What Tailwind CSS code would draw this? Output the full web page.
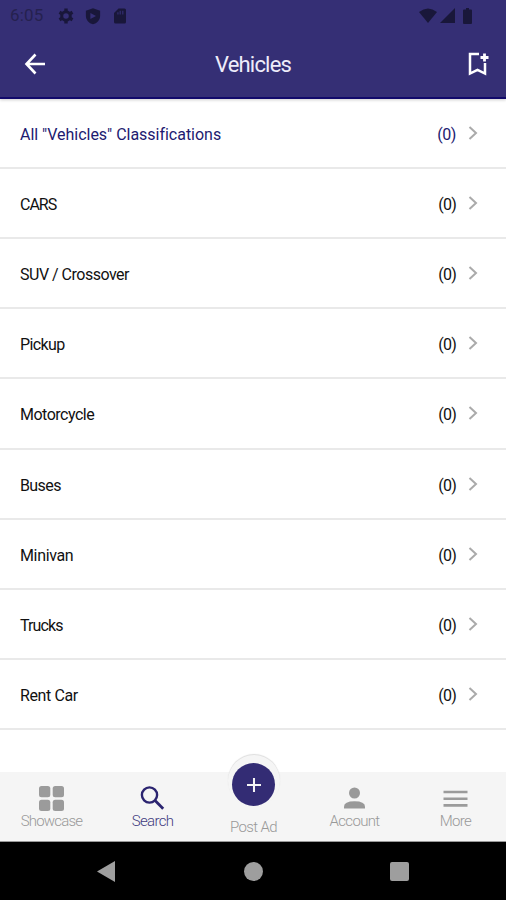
<!DOCTYPE html>
<html lang="en">
<head>
<meta charset="utf-8">
<title>Vehicles</title>
<script src="https://cdn.jsdelivr.net/npm/@tailwindcss/browser@4"></script>
</head>
<body class="h-[900px] w-[506px] overflow-hidden bg-white font-[Roboto,sans-serif]">
<div class="flex h-full flex-col">
  <header class="h-[99px] shrink-0 border-b-2 border-[#120a6b] bg-[#352f75] shadow-[0_1px_3px_rgba(0,0,0,0.2)]">
    <div class="flex h-[31px] items-center pl-[10px] pr-[33px] text-[#19173a]">
      <span class="w-[34px] text-[17px] leading-none tracking-[0.2px] text-[#25214f]">6:05</span>
      <svg class="ml-[13px] size-[18px]" viewBox="0 0 24 24" fill="none" stroke="currentColor"><circle cx="12" cy="12" r="5.700" stroke-width="4"/><path stroke-width="4.500" d="M12 2v4M12 18v4M3.300 7l3.500 2M17.200 15l3.500 2M3.300 17l3.500-2M17.200 9l3.500-2"/></svg>
      <svg class="ml-[9px] size-[18px]" viewBox="0 0 24 24" fill="currentColor"><path fill-rule="evenodd" d="M12 1.500 2.500 5v6.500c0 5.500 4 10 9.500 11.500 5.500-1.500 9.500-6 9.500-11.500V5zM8.500 8v8l7.500-4z"/></svg>
      <svg class="ml-[9px] size-[18px]" viewBox="0 0 24 24" fill="currentColor"><path fill-rule="evenodd" d="M18 2h-8L4 8v12a2 2 0 0 0 2 2h12a2 2 0 0 0 2-2V4a2 2 0 0 0-2-2zM8.500 7H10v3H8.500zM11.500 5H13v5h-1.500zM15 5h1.500v5H15z"/></svg>
      <svg class="ml-auto h-[15px] w-[18px]" viewBox="0 0 18 15" fill="currentColor"><path d="M0 4Q9-3 18 4L9 15z"/></svg>
      <svg class="ml-[3px] h-[15px] w-[15px]" viewBox="0 0 15 15" fill="currentColor"><path d="M0 15 15 0v15z"/></svg>
      <svg class="ml-[8px] mr-px h-[16px] w-[9px]" viewBox="0 0 9 16" fill="currentColor"><path d="M3 0h3v1.500h2q1 0 1 1V15q0 1-1 1H1q-1 0-1-1V2.500q0-1 1-1h2z"/></svg>
    </div>
    <div class="grid h-[66px] grid-cols-[60px_1fr_60px] items-center text-white">
      <svg class="ml-[24px] size-[22px]" viewBox="0 0 22 22" fill="none" stroke="currentColor" stroke-width="2.600"><path d="M21 11H3M11.500 1.500 2.500 11l9 9.500"/></svg>
      <h1 class="pt-[2px] text-center text-[22px] leading-none tracking-[-0.8px] text-[#eeecfa]">Vehicles</h1>
      <svg class="ml-[21px] h-[26px] w-[22px]" viewBox="0 0 22 26" fill="none" stroke="currentColor"><path stroke-width="2.500" d="M12 3H3v19.500l7.500-3.700 7.500 3.700V12"/><path stroke-width="2.800" d="M13.500 6.500h8M17.500 2.500v8"/></svg>
    </div>
  </header>
  <main class="flex h-[673px] shrink-0 flex-col text-[16px] leading-none text-[#111]">
    <div class="flex h-[70px] items-center border-b-2 border-[#e9e9e9] pl-5 pr-[28px] text-[#211a70]"><span class="pt-[3px] tracking-[-0.020px]">All "Vehicles" Classifications</span><span class="ml-auto mr-[12px] pt-[3px] tracking-[-0.4px]">(0)</span><svg class="h-[14px] w-[10px]" viewBox="0 0 10 14" fill="none" stroke="#aaa" stroke-width="2"><path d="M1.500 1 8 7l-6.500 6"/></svg></div>
    <div class="flex h-[70.150px] items-center border-b-2 border-[#e9e9e9] pl-5 pr-[28px]"><span class="pt-[4px] tracking-[-1px]">CARS</span><span class="ml-auto mr-[12px] pt-[4px] tracking-[-0.8px]">(0)</span><svg class="h-[14px] w-[10px]" viewBox="0 0 10 14" fill="none" stroke="#aaa" stroke-width="2"><path d="M1.500 1 8 7l-6.500 6"/></svg></div>
    <div class="flex h-[70.150px] items-center border-b-2 border-[#e9e9e9] pl-5 pr-[28px]"><span class="pt-[4px] tracking-[-0.5px]">SUV / Crossover</span><span class="ml-auto mr-[12px] pt-[4px] tracking-[-0.8px]">(0)</span><svg class="h-[14px] w-[10px]" viewBox="0 0 10 14" fill="none" stroke="#aaa" stroke-width="2"><path d="M1.500 1 8 7l-6.500 6"/></svg></div>
    <div class="flex h-[70.150px] items-center border-b-2 border-[#e9e9e9] pl-5 pr-[28px]"><span class="pt-[4px] tracking-[-0.6px]">Pickup</span><span class="ml-auto mr-[12px] pt-[4px] tracking-[-0.8px]">(0)</span><svg class="h-[14px] w-[10px]" viewBox="0 0 10 14" fill="none" stroke="#aaa" stroke-width="2"><path d="M1.500 1 8 7l-6.500 6"/></svg></div>
    <div class="flex h-[70.150px] items-center border-b-2 border-[#e9e9e9] pl-5 pr-[28px]"><span class="pt-[4px] tracking-[-0.5px]">Motorcycle</span><span class="ml-auto mr-[12px] pt-[4px] tracking-[-0.8px]">(0)</span><svg class="h-[14px] w-[10px]" viewBox="0 0 10 14" fill="none" stroke="#aaa" stroke-width="2"><path d="M1.500 1 8 7l-6.500 6"/></svg></div>
    <div class="flex h-[70.150px] items-center border-b-2 border-[#e9e9e9] pl-5 pr-[28px]"><span class="pt-[4px] tracking-[-0.6px]">Buses</span><span class="ml-auto mr-[12px] pt-[4px] tracking-[-0.8px]">(0)</span><svg class="h-[14px] w-[10px]" viewBox="0 0 10 14" fill="none" stroke="#aaa" stroke-width="2"><path d="M1.500 1 8 7l-6.500 6"/></svg></div>
    <div class="flex h-[70.150px] items-center border-b-2 border-[#e9e9e9] pl-5 pr-[28px]"><span class="pt-[4px] tracking-[-0.35px]">Minivan</span><span class="ml-auto mr-[12px] pt-[4px] tracking-[-0.8px]">(0)</span><svg class="h-[14px] w-[10px]" viewBox="0 0 10 14" fill="none" stroke="#aaa" stroke-width="2"><path d="M1.500 1 8 7l-6.500 6"/></svg></div>
    <div class="flex h-[70.150px] items-center border-b-2 border-[#e9e9e9] pl-5 pr-[28px]"><span class="pt-[4px] tracking-[-0.9px]">Trucks</span><span class="ml-auto mr-[12px] pt-[4px] tracking-[-0.8px]">(0)</span><svg class="h-[14px] w-[10px]" viewBox="0 0 10 14" fill="none" stroke="#aaa" stroke-width="2"><path d="M1.500 1 8 7l-6.500 6"/></svg></div>
    <div class="flex h-[70.150px] items-center border-b-2 border-[#e9e9e9] pl-5 pr-[28px]"><span class="pt-[4px] tracking-[-0.4px]">Rent Car</span><span class="ml-auto mr-[12px] pt-[4px] tracking-[-0.8px]">(0)</span><svg class="h-[14px] w-[10px]" viewBox="0 0 10 14" fill="none" stroke="#aaa" stroke-width="2"><path d="M1.500 1 8 7l-6.500 6"/></svg></div>
  </main>
  <nav class="relative grid h-[70px] shrink-0 grid-cols-5 border-b border-[#999] bg-[#f5f5f5] pl-px text-center text-[15px] font-light leading-none tracking-[-0.65px] text-[#999]">
    <div class="flex flex-col items-center pt-[14px]"><svg class="size-[25px]" viewBox="0 0 25 25" fill="#9b9b9b"><rect width="11.300" height="11.300" rx="2.500"/><rect x="13.700" width="11.300" height="11.300" rx="2.500"/><rect y="13.700" width="11.300" height="11.300" rx="2.500"/><rect x="13.700" y="13.700" width="11.300" height="11.300" rx="2.500"/></svg><span class="mt-[3px] tracking-[-0.8px]">Showcase</span></div>
    <div class="flex flex-col items-center pt-[14px] text-[#413b80]"><svg class="size-[25px]" viewBox="0 0 25 25" fill="none" stroke="#2b2470" stroke-width="2.400"><circle cx="9.500" cy="9" r="7.600"/><path d="m14.800 14.300 8.400 8.400" stroke-width="2.800"/></svg><span class="mt-[3px]">Search</span></div>
    <div class="flex flex-col items-center"><div class="absolute -top-[17px] h-[52px] w-[52px] rounded-full bg-[#f5f5f5] shadow-[0_-1px_1px_#ddd]"></div><div class="absolute -top-[9px] flex size-[43px] items-center justify-center rounded-full bg-[#332c74]"><svg class="size-[14px]" viewBox="0 0 15 15" stroke="#f5f5f5" stroke-width="2.200"><path d="M7.500 0v15M0 7.500h15"/></svg></div><span class="mt-[48px]">Post Ad</span></div>
    <div class="flex flex-col items-center pt-[14px]"><svg class="size-[25px]" viewBox="0 0 25 25" fill="#999"><circle cx="12.500" cy="7" r="5.500"/><path d="M2 22.500v-1.700q0-5.500 10.500-5.500T23 20.800v1.700z"/></svg><span class="mt-[3px]">Account</span></div>
    <div class="flex flex-col items-center pt-[14px]"><svg class="size-[25px]" viewBox="0 0 25 25" stroke="#9b9b9b" stroke-width="2.600"><path d="M.5 6h24M.5 12.700h24M.5 19.400h24"/></svg><span class="mt-[3px]">More</span></div>
  </nav>
  <div class="flex h-[58px] items-center bg-black pl-[97px] pr-[97px]">
    <svg class="h-[21px] w-[18px]" viewBox="0 0 18 21" fill="#9e9e9e"><path d="M0 10.500 18 0v21z"/></svg>
    <div class="ml-auto size-[19px] translate-x-px rounded-full bg-[#9e9e9e]"></div>
    <div class="ml-auto size-[19px] rounded-[2px] bg-[#9e9e9e]"></div>
  </div>
</div>
</body>
</html>
